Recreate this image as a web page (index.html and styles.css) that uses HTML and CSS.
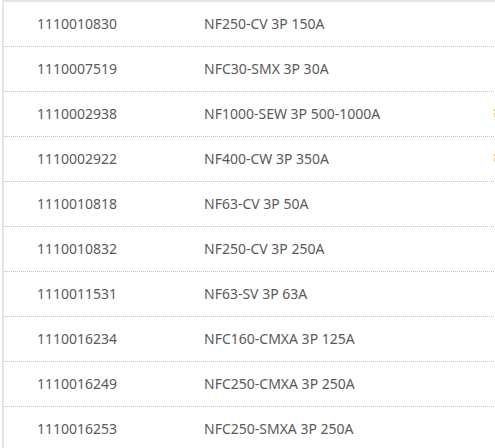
FILE: index.html
```html
<!DOCTYPE html>
<html>
<head>
<meta charset="utf-8">
<link rel="stylesheet" href="styles.css">
</head>
<body>
<div class="table">
  <div class="row"><span class="code">1110010830</span><span class="name">NF250-CV 3P 150A</span><span class="extra"></span></div>
  <div class="row"><span class="code">1110007519</span><span class="name">NFC30-SMX 3P 30A</span><span class="extra"></span></div>
  <div class="row"><span class="code">1110002938</span><span class="name">NF1000-SEW 3P 500-1000A</span><span class="extra"><span class="mark"></span></span></div>
  <div class="row"><span class="code">1110002922</span><span class="name">NF400-CW 3P 350A</span><span class="extra"><span class="mark"></span></span></div>
  <div class="row"><span class="code">1110010818</span><span class="name">NF63-CV 3P 50A</span><span class="extra"></span></div>
  <div class="row"><span class="code">1110010832</span><span class="name">NF250-CV 3P 250A</span><span class="extra"></span></div>
  <div class="row"><span class="code">1110011531</span><span class="name">NF63-SV 3P 63A</span><span class="extra"></span></div>
  <div class="row"><span class="code">1110016234</span><span class="name">NFC160-CMXA 3P 125A</span><span class="extra"></span></div>
  <div class="row"><span class="code">1110016249</span><span class="name">NFC250-CMXA 3P 250A</span><span class="extra"></span></div>
  <div class="row"><span class="code">1110016253</span><span class="name">NFC250-SMXA 3P 250A</span><span class="extra"></span></div>
</div>
</body>
</html>
```

FILE: styles.css
```css
html, body {
  margin: 0;
  padding: 0;
  background: #fff;
  overflow: hidden;
  width: 495px;
  height: 448px;
}
.table {
  margin-left: 2px;
  border-top: 2px solid #e6e6e6;
  border-left: 2px solid #e6e6e6;
  width: 560px;
  height: 460px;
  font-family: "Noto Sans", "Noto Sans CJK SC", sans-serif;
  font-size: 14px;
  color: #5a5a5a;
}
.row {
  display: grid;
  grid-template-columns: 167px 290px 100px;
  align-items: center;
  height: 44px;
  padding-left: 33px;
  border-bottom: 1px dotted #c4c4c4;
}
.code, .name {
  white-space: nowrap;
  line-height: 20px;
}
.extra {
  display: flex;
  align-items: center;
  height: 20px;
}
.mark {
  display: block;
  width: 3px;
  height: 8px;
  margin-top: -2px;
  background: linear-gradient(#f5b547 0 2px, transparent 2px 4px, #f7c978 4px 8px);
}
```
